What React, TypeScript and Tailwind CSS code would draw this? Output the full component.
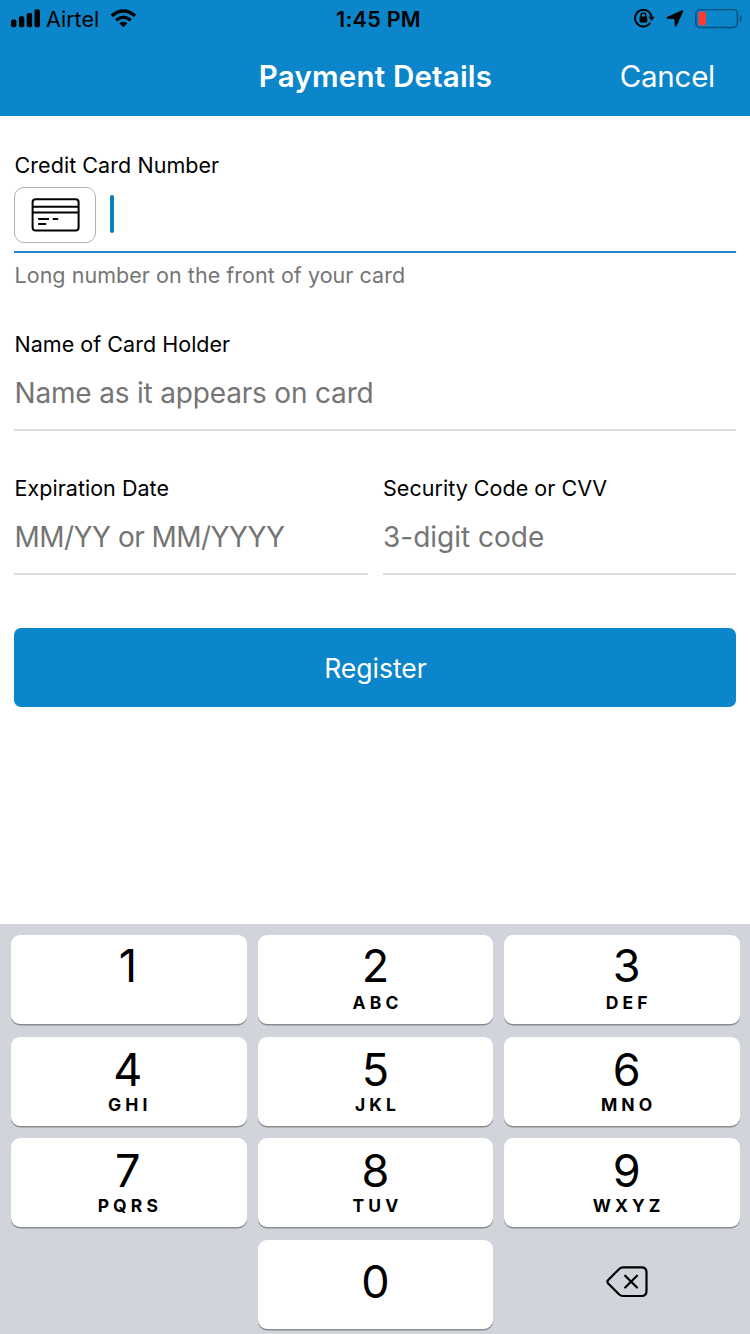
const keys = [
  { digit: '1', letters: '' },
  { digit: '2', letters: 'ABC' },
  { digit: '3', letters: 'DEF' },
  { digit: '4', letters: 'GHI' },
  { digit: '5', letters: 'JKL' },
  { digit: '6', letters: 'MNO' },
  { digit: '7', letters: 'PQRS' },
  { digit: '8', letters: 'TUV' },
  { digit: '9', letters: 'WXYZ' },
];

const columnOffset = ['pr-[2px]', '', 'pl-[9px]'];

function StatusBar() {
  return (
    <div className="grid h-[38px] grid-cols-3 items-center text-black">
      <div className="flex items-center pl-[11px]">
        <svg width="30" height="20" viewBox="0 0 30 20">
          <rect x="0" y="10.4" width="5.4" height="7.8" rx="1.8" />
          <rect x="7.9" y="7.2" width="5.4" height="11" rx="1.8" />
          <rect x="15.7" y="3.9" width="5.4" height="14.3" rx="1.8" />
          <rect x="23.5" y="0.2" width="5.4" height="18" rx="1.8" />
        </svg>
        <span className="ml-[5px] w-[53px] text-[21.5px] leading-[38px]">Airtel</span>
        <svg className="ml-[11px]" width="27" height="20" viewBox="0 0 27 20">
          <path d="M13.4 18.2 L9.4 14.2 Q13.4 10.8 17.4 14.2Z" />
          <path d="M6.1 11.2 Q13.4 5 20.7 11.2" fill="none" stroke="#000" strokeWidth="3.2" />
          <path d="M1.8 6.9 Q13.4 -3 25 6.9" fill="none" stroke="#000" strokeWidth="3.4" />
        </svg>
      </div>
      <div className="pl-[7px] text-center text-[21.5px] font-semibold leading-[38px] tracking-[0.3px]">1:45 PM</div>
      <div className="flex items-center justify-end pr-[8px]">
        <svg width="22" height="20" viewBox="0 0 22 20">
          <path d="M17.2 13.8 A8.3 8.3 0 1 1 18.6 8.4" fill="none" stroke="#000" strokeWidth="1.9" />
          <path d="M15.3 7.8H21.8L18.6 11.8Z" />
          <rect x="6.6" y="7.6" width="7.6" height="5.8" rx="0.8" />
          <path d="M8.1 8V6.2a2.3 2.3 0 0 1 4.6 0V8" fill="none" stroke="#000" strokeWidth="1.4" />
        </svg>
        <svg className="ml-[11px]" width="18" height="18" viewBox="0 0 18 18">
          <path d="M16.1 .3 L1 7 Q-.2 8.3 1.4 8.8 L8 8.9 Q8.6 8.9 8.6 9.5 L8.7 15.8 Q9.2 17.4 10.7 16 L17.1 1.6 Q17.5 0 16.1 .3Z" />
        </svg>
        <svg className="ml-[11px]" width="47" height="20" viewBox="0 0 47 20">
          <rect x="0.9" y="0.5" width="41.5" height="18" rx="4.2" fill="none" stroke="#06507d" strokeWidth="1.6" />
          <rect x="3.5" y="2.8" width="7.5" height="13.4" rx="1.4" fill="#ff3b30" />
          <path d="M44.8 5.9 Q46.9 6.8 46.9 9.4 Q46.9 12 44.8 12.9Z" fill="#06507d" />
        </svg>
      </div>
    </div>
  );
}

function Header() {
  return (
    <header className="h-[116px] bg-[#0b86ca]">
      <StatusBar />
      <div className="grid h-[78px] grid-cols-[1fr_auto_1fr] items-start text-white">
        <h1 className="col-start-2 pl-px text-[29.5px] font-semibold leading-[76px] tracking-[0.2px]">Payment Details</h1>
        <button className="justify-self-end pr-[35px] text-[29.5px] leading-[76px] tracking-[-0.25px]">Cancel</button>
      </div>
    </header>
  );
}

function CardIcon() {
  return (
    <svg width="49" height="34" viewBox="0 0 49 34" fill="none" stroke="#000" strokeWidth="2">
      <rect x="1.6" y="1.2" width="46" height="31.3" rx="3" />
      <path d="M1.6 8.8H47.6M1.6 14.6H47.6" />
      <path d="M7.2 21.1H18M21.7 21.1H27.2M7.2 26.1H15.2" />
    </svg>
  );
}

type FieldProps = { label: string; placeholder: string; tracking: string };

function Field({ label, placeholder, tracking }: FieldProps) {
  return (
    <label className="block h-[101px] border-b-2 border-[#dedede]">
      <span className="block pl-[0.5px] text-[21.5px] leading-7 tracking-[0.03px] text-black">{label}</span>
      <span className={`mt-[17px] block pl-[0.5px] text-[28px] leading-9 text-[#757575] ${tracking}`}>{placeholder}</span>
    </label>
  );
}

function Form() {
  return (
    <main className="h-[808px] bg-white px-[14px] pt-[35px]">
      <div className="h-[102px] border-b-2 border-[#2382c8]">
        <div className="pl-[0.5px] text-[21.5px] leading-7 tracking-[0.06px] text-black">Credit Card Number</div>
        <div className="mt-2 flex items-start">
          <div className="flex h-14 w-[82px] items-center justify-center rounded-[10px] border border-[#b0b0b0]">
            <CardIcon />
          </div>
          <div className="ml-[14px] mt-[7.5px] h-[38px] w-1 rounded-full bg-[#0b7cc8]" />
        </div>
      </div>
      <p className="mt-[7px] pl-[0.5px] pt-px text-[21.5px] leading-7 tracking-[0.04px] text-[#757575]">
        Long number on the front of your card
      </p>
      <div className="mt-[41px]">
        <Field label="Name of Card Holder" placeholder="Name as it appears on card" tracking="tracking-[-0.18px]" />
      </div>
      <div className="mt-[43px] grid grid-cols-2 gap-[15px]">
        <Field label="Expiration Date" placeholder="MM/YY or MM/YYYY" tracking="tracking-[-0.53px]" />
        <Field label="Security Code or CVV" placeholder="3-digit code" tracking="tracking-normal" />
      </div>
      <button className="mt-[53px] block h-[79px] w-full rounded-[7px] bg-[#0b86ca] pl-px pt-[2px] text-[26.5px] text-white">
        Register
      </button>
    </main>
  );
}

function Keypad() {
  return (
    <div className="h-[410px] bg-[#d1d4da] pl-[11px] pr-[10px] pt-[11px]">
      <div className="grid auto-rows-[89px] grid-cols-3 gap-x-[11px] gap-y-[12.6px]">
        {keys.map(({ digit, letters }, i) => (
          <button
            key={digit}
            className={`flex flex-col items-center rounded-[9px] bg-white text-black shadow-[0_1.5px_0_#898b8f] ${columnOffset[i % 3]}`}
          >
            <span className={i < 3 ? 'mb-[2px] mt-[4px] text-[45px] leading-[54px]' : 'mt-[6px] text-[45px] leading-[54px]'}>
              {digit}
            </span>
            <span className="-mt-[2px] pl-[4px] text-[17.5px] font-bold leading-5 tracking-[4.1px]">{letters}</span>
          </button>
        ))}
        <div />
        <button className="flex items-center justify-center rounded-[9px] bg-white pb-[4px] text-black shadow-[0_1.5px_0_#898b8f]">
          <span className="text-[45px] leading-[54px]">0</span>
        </button>
        <button className="flex items-center justify-center pb-[4px] pl-[9px]">
          <svg width="42" height="32" viewBox="0 0 42 32" fill="none" stroke="#000" strokeWidth="2.2" strokeLinejoin="round" strokeLinecap="round">
            <path d="M17 1.3H35.5Q40.5 1.3 40.5 6.3V25Q40.5 30 35.5 30H17Q14.8 30 13.2 28.5L2.2 17.4Q.6 15.7 2.2 14L13.2 2.9Q14.8 1.3 17 1.3Z" />
            <path d="M19.2 9.7L31 21.5M31 9.7L19.2 21.5" />
          </svg>
        </button>
      </div>
    </div>
  );
}

export default function App() {
  return (
    <div className="h-[1334px] w-[750px] overflow-hidden bg-white font-[Inter,'Liberation_Sans',sans-serif]">
      <Header />
      <Form />
      <Keypad />
    </div>
  );
}
